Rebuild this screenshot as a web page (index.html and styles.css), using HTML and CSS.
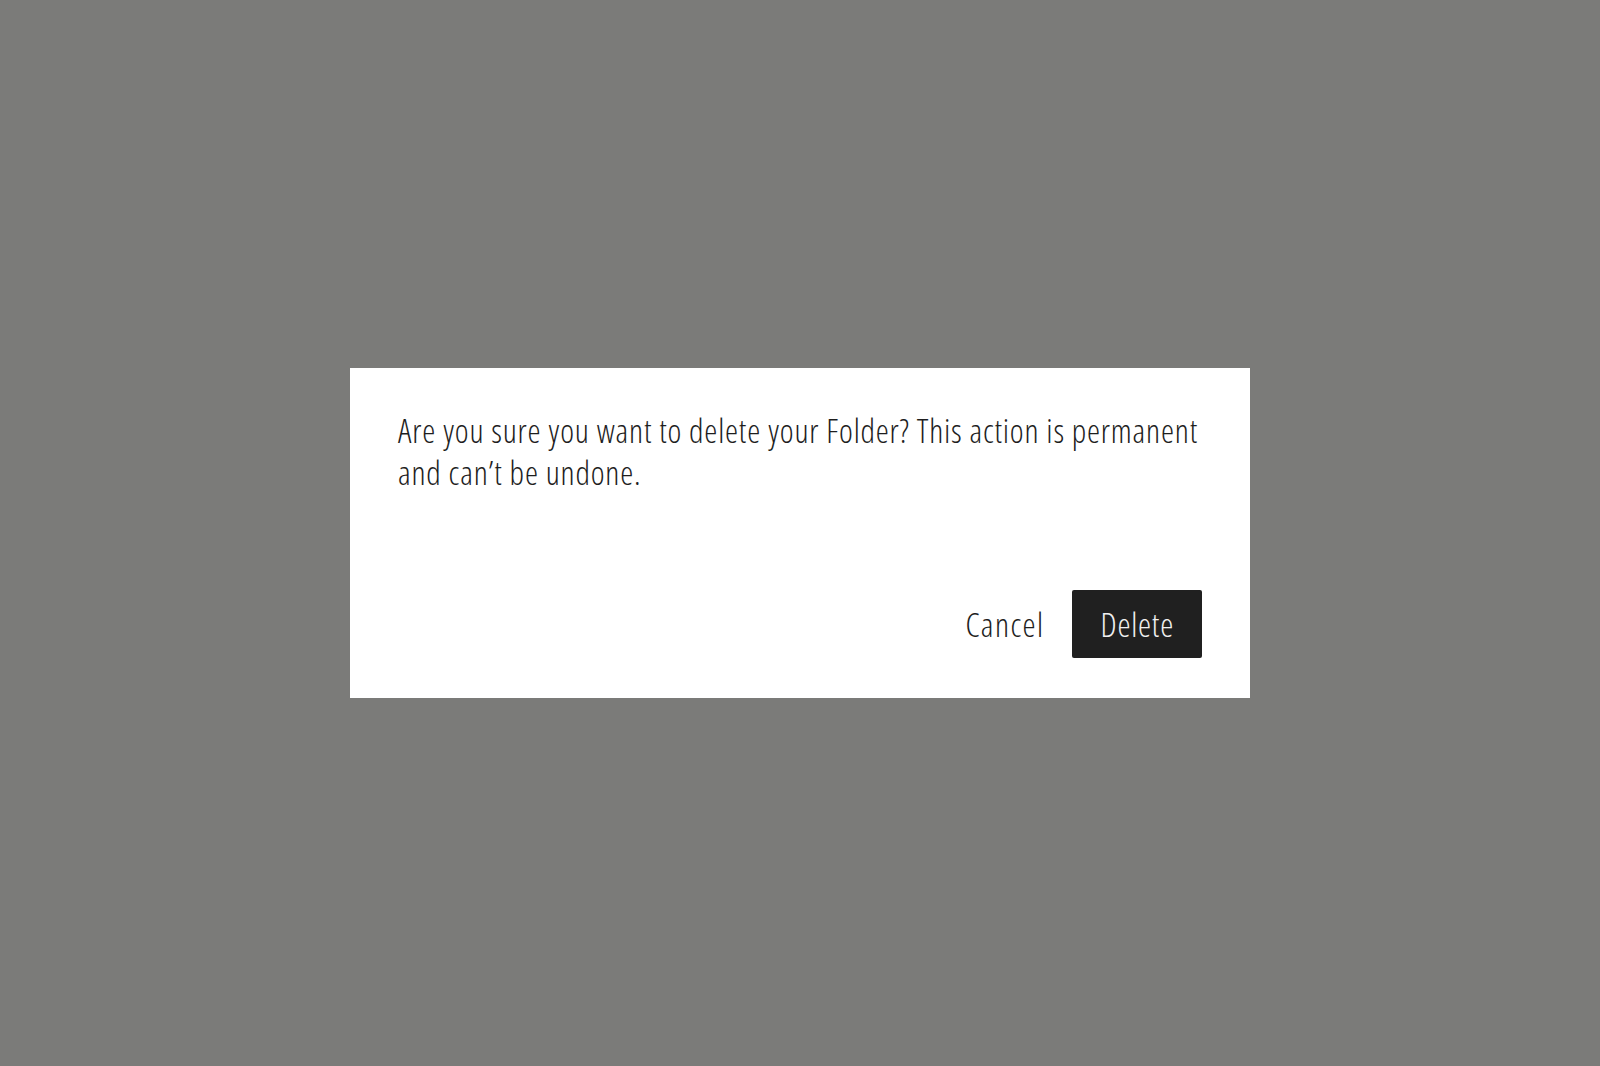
FILE: index.html
```html
<!DOCTYPE html>
<html lang="en">
<head>
<meta charset="utf-8">
<title>Delete folder</title>
<link rel="stylesheet" href="styles.css">
</head>
<body>
<div class="overlay">
  <div class="dialog" role="dialog" aria-modal="true">
    <p class="message">Are you sure you want to delete your Folder? This action is permanent and can’t be undone.</p>
    <div class="actions">
      <button class="btn btn-cancel" type="button">Cancel</button>
      <button class="btn btn-delete" type="button">Delete</button>
    </div>
  </div>
</div>
</body>
</html>
```

FILE: styles.css
```css
* { box-sizing: border-box; }
html, body {
  margin: 0;
  padding: 0;
}
body {
  background: #7b7b79;
  font-family: "Open Sans", "Liberation Sans", sans-serif;
  font-stretch: 75%;
  font-weight: 350;
  color: #1e1e1e;
}
.overlay {
  width: 1600px;
  height: 1066px;
  display: flex;
  justify-content: center;
  padding-top: 368px;
}
.dialog {
  width: 900px;
  height: 330px;
  background: #ffffff;
  padding: 42px 48px 40px 48px;
  display: flex;
  flex-direction: column;
  justify-content: space-between;
}
.message {
  margin: 0;
  font-size: 33px;
  line-height: 42px;
  letter-spacing: 0.8px;
}
.actions {
  display: flex;
  justify-content: flex-end;
  align-items: center;
}
.btn {
  font-family: inherit;
  font-stretch: 75%;
  font-weight: 350;
  font-size: 33px;
  letter-spacing: 0.8px;
  height: 68px;
  padding: 0 28px;
  border: none;
  border-radius: 2px;
  cursor: pointer;
}
.btn-cancel {
  background: transparent;
  color: #1e1e1e;
  letter-spacing: 1.4px;
}
.btn-delete {
  background: #202020;
  color: #f0f0f0;
}
```
